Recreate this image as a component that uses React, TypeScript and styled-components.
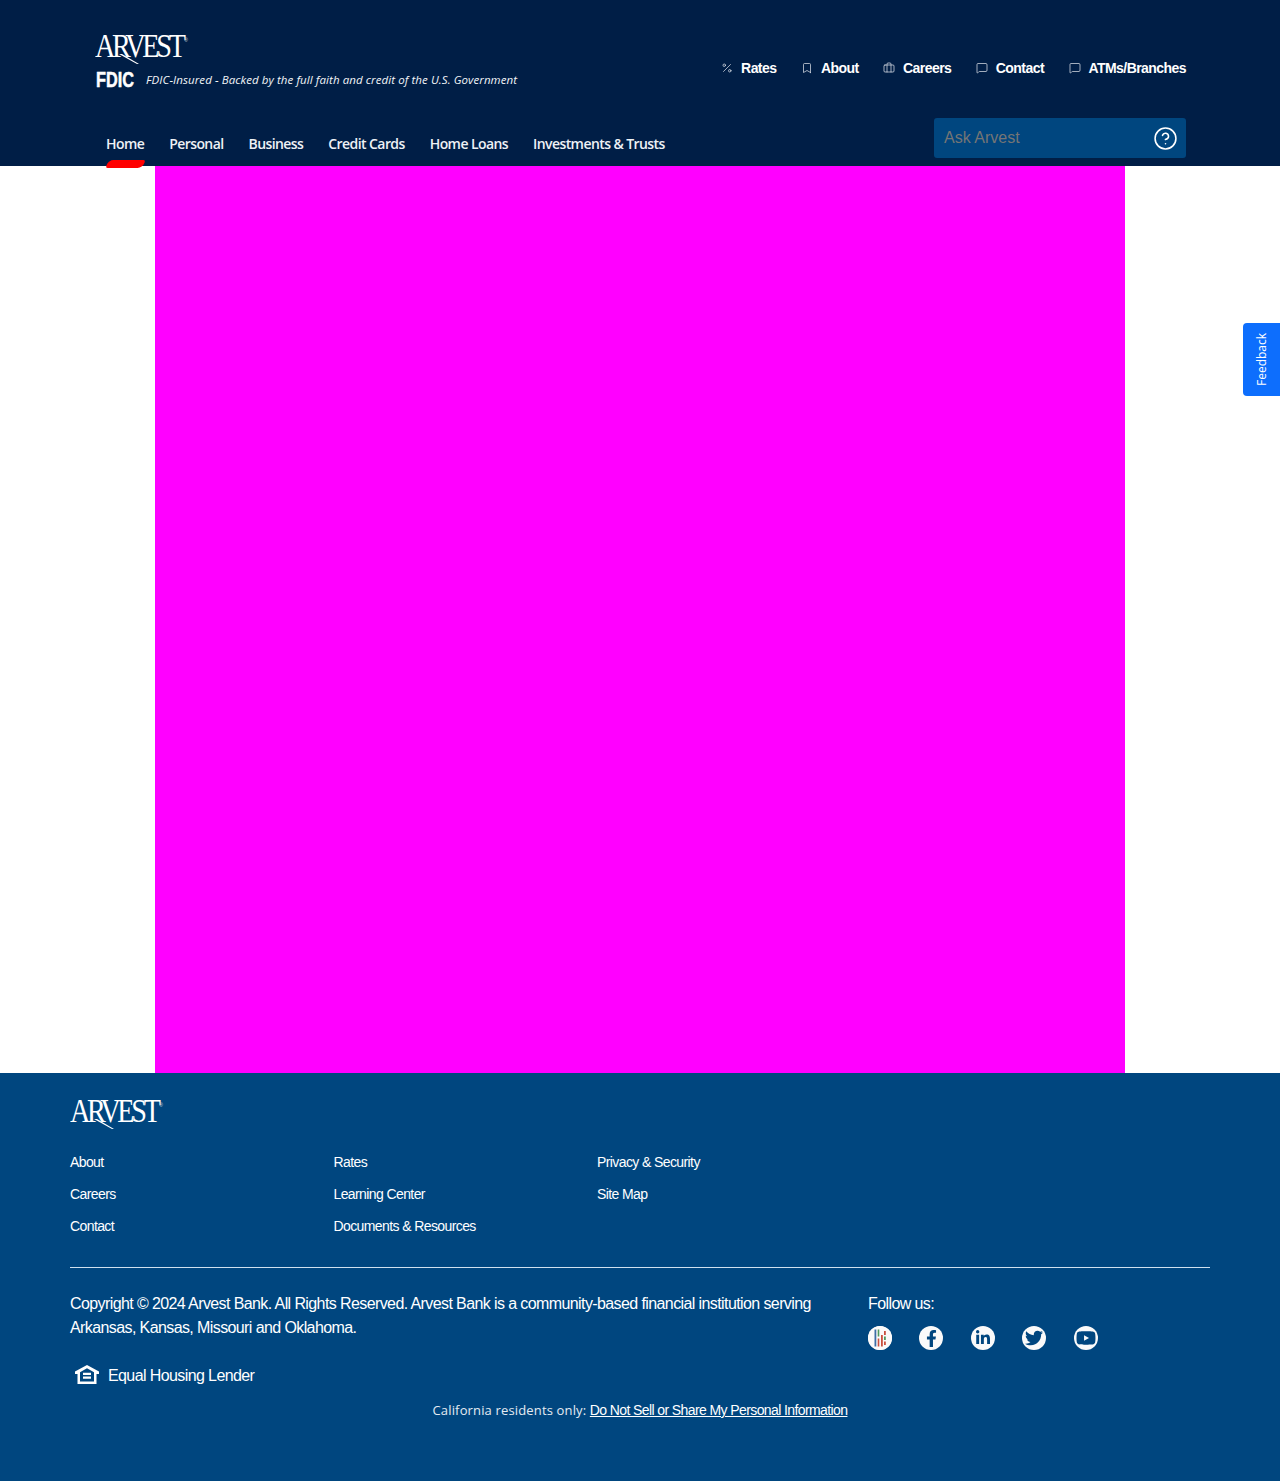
import React from 'react';
import styled, { createGlobalStyle } from 'styled-components';
import { Bookmark, Briefcase, CircleHelp, MessageSquare, Percent } from 'lucide-react';
import { FaFacebookF, FaLinkedinIn, FaTwitter, FaYoutube } from 'react-icons/fa';

const GlobalStyle = createGlobalStyle`
  html, body {
    margin: 0;
    padding: 0;
    background: #fff;
    font-family: "Liberation Sans", Arial, sans-serif;
  }
  * {
    box-sizing: border-box;
  }
`;

const topLinks = [
  { label: 'Rates', Icon: Percent },
  { label: 'About', Icon: Bookmark },
  { label: 'Careers', Icon: Briefcase },
  { label: 'Contact', Icon: MessageSquare },
  { label: 'ATMs/Branches', Icon: MessageSquare },
];

const navLinks = ['Home', 'Personal', 'Business', 'Credit Cards', 'Home Loans', 'Investments & Trusts'];

const footerColumns = [
  ['About', 'Careers', 'Contact'],
  ['Rates', 'Learning Center', 'Documents & Resources'],
  ['Privacy & Security', 'Site Map'],
];

const Logo: React.FC = () => (
  <LogoWrap>
    <LogoText>ARVEST</LogoText>
    <LogoMark>®</LogoMark>
    <LogoLeg viewBox="0 0 20 10" aria-hidden="true">
      <path d="M0 0 L18 10 L20 10 L3 0 Z" fill="#fff" />
    </LogoLeg>
  </LogoWrap>
);

const HousingIcon: React.FC = () => (
  <HousingSvg viewBox="0 0 24 19" aria-hidden="true">
    <path
      fillRule="evenodd"
      fill="#fff"
      d="M12 0 L24 6.5 V9 H21.5 V19 H2.5 V9 H0 V6.5 Z M12 3.3 L5 7.2 V16.6 H19 V7.2 Z M8 7.8 H16 V10 H8 Z M8 11.6 H16 V13.8 H8 Z"
    />
  </HousingSvg>
);

const BarsIcon: React.FC = () => (
  <svg width="24" height="24" viewBox="0 0 24 24" aria-hidden="true">
    <circle cx="12" cy="12" r="12" fill="#fafafa" />
    <rect x="6.5" y="3.5" width="1.8" height="17" fill="#3d6ea5" />
    <rect x="9.7" y="3.5" width="1.6" height="7" fill="#4f9a5e" />
    <rect x="9.7" y="12.5" width="1.6" height="8" fill="#c9503f" />
    <rect x="13" y="9" width="1.8" height="11.5" fill="#c9503f" />
    <rect x="16" y="5" width="1.8" height="4" fill="#c9503f" />
    <rect x="16" y="10.5" width="1.8" height="3.5" fill="#4f9a5e" />
    <rect x="16" y="15.5" width="1.8" height="3.5" fill="#c9503f" />
  </svg>
);

const App: React.FC = () => (
  <>
    <GlobalStyle />
    <Header>
      <TopRow>
        <Brand>
          <Logo />
          <FdicRow>
            <FdicBox>
              <FdicMark>FDIC</FdicMark>
            </FdicBox>
            <FdicNote>FDIC-Insured - Backed by the full faith and credit of the U.S. Government</FdicNote>
          </FdicRow>
        </Brand>
        <TopNav>
          {topLinks.map(({ label, Icon }) => (
            <TopLink key={label} href="#">
              <Icon size={12} strokeWidth={1.5} color="#d8dde6" />
              {label}
            </TopLink>
          ))}
        </TopNav>
      </TopRow>
      <NavRow>
        <MainNav>
          {navLinks.map((label, i) => (
            <NavLink key={label} href="#" $active={i === 0}>
              {label}
            </NavLink>
          ))}
        </MainNav>
        <SearchBox>
          <SearchInput placeholder="Ask Arvest" />
          <CircleHelp size={25} strokeWidth={1.5} color="#fff" />
        </SearchBox>
      </NavRow>
    </Header>
    <Main>
      <Placeholder />
      <FeedbackTab>Feedback</FeedbackTab>
    </Main>
    <Footer>
      <FooterLogo>
        <Logo />
      </FooterLogo>
      <LinkGrid>
        {footerColumns.map((column) => (
          <LinkColumn key={column[0]}>
            {column.map((label) => (
              <FooterLink key={label} href="#">
                {label}
              </FooterLink>
            ))}
          </LinkColumn>
        ))}
      </LinkGrid>
      <Rule />
      <LegalRow>
        <LegalText>
          <Copyright>
            Copyright © 2024 Arvest Bank. All Rights Reserved. Arvest Bank is a community-based financial
            institution serving Arkansas, Kansas, Missouri and Oklahoma.
          </Copyright>
          <Housing>
            <HousingIcon />
            Equal Housing Lender
          </Housing>
        </LegalText>
        <Follow>
          <FollowTitle>Follow us:</FollowTitle>
          <SocialRow>
            <SocialLink href="#" aria-label="Blog">
              <BarsIcon />
            </SocialLink>
            <SocialLink href="#" aria-label="Facebook">
              <FaFacebookF size={17} />
            </SocialLink>
            <SocialLink href="#" aria-label="LinkedIn">
              <FaLinkedinIn size={16} />
            </SocialLink>
            <SocialLink href="#" aria-label="Twitter">
              <FaTwitter size={18} />
            </SocialLink>
            <SocialLink href="#" aria-label="YouTube">
              <FaYoutube size={20} />
            </SocialLink>
          </SocialRow>
        </Follow>
      </LegalRow>
      <California>
        California residents only: <CaliforniaLink href="#">Do Not Sell or Share My Personal Information</CaliforniaLink>
      </California>
    </Footer>
  </>
);

export default App;

const Header = styled.header`
  height: 166px;
  background: #001e46;
  padding: 32px 94px 0 95px;
  display: flex;
  flex-direction: column;
  position: relative;
`;

const TopRow = styled.div`
  display: flex;
  justify-content: space-between;
  align-items: flex-start;
  height: 86px;
`;

const Brand = styled.div`
  display: flex;
  flex-direction: column;
`;

const LogoWrap = styled.div`
  position: relative;
  width: 92px;
  height: 32px;
  color: #fff;
`;

const LogoText = styled.span`
  display: block;
  width: 108px;
  font-family: "Liberation Serif", "Times New Roman", serif;
  font-size: 34px;
  line-height: 28px;
  letter-spacing: -4px;
  transform: scaleX(0.83);
  transform-origin: left top;
  white-space: nowrap;
`;

const LogoMark = styled.span`
  position: absolute;
  top: 5px;
  right: -1px;
  font-size: 5px;
  line-height: 6px;
  color: #c8d0dc;
`;

const LogoLeg = styled.svg`
  position: absolute;
  left: 24px;
  top: 22px;
  width: 20px;
  height: 10px;
`;

const FdicRow = styled.div`
  display: flex;
  align-items: center;
  margin-top: 7px;
  padding-left: 1px;
`;

const FdicBox = styled.div`
  width: 38px;
  height: 18px;
`;

const FdicMark = styled.span`
  display: block;
  width: 51px;
  font-family: "Liberation Sans", Arial, sans-serif;
  font-weight: 700;
  font-size: 22px;
  line-height: 18px;
  -webkit-text-stroke: 0.5px #fff;
  color: #fff;
  transform: scaleX(0.74);
  transform-origin: left center;
`;

const FdicNote = styled.span`
  margin-left: 12px;
  font-family: "Open Sans", sans-serif;
  font-style: italic;
  font-size: 11.5px;
  line-height: 18px;
  letter-spacing: 0.08px;
  color: #f2f4f7;
  white-space: nowrap;
`;

const TopNav = styled.nav`
  display: flex;
  gap: 24.5px;
  margin-top: 28px;
`;

const TopLink = styled.a`
  display: flex;
  align-items: center;
  gap: 8px;
  font-size: 14px;
  line-height: 16px;
  font-weight: 700;
  letter-spacing: -0.56px;
  color: #fff;
  text-decoration: none;
`;

const NavRow = styled.div`
  display: flex;
  justify-content: space-between;
  align-items: flex-start;
`;

const MainNav = styled.nav`
  display: flex;
  gap: 25px;
  padding-left: 11px;
  margin-top: 17px;
`;

const NavLink = styled.a<{ $active?: boolean }>`
  position: relative;
  font-family: "Open Sans", sans-serif;
  font-size: 14px;
  line-height: 18px;
  font-weight: 600;
  letter-spacing: -0.58px;
  color: #eef1f5;
  text-decoration: none;
  white-space: nowrap;

  &::after {
    content: '';
    display: ${({ $active }) => ($active ? 'block' : 'none')};
    position: absolute;
    left: 1px;
    right: 0;
    top: 25px;
    height: 8px;
    background: #f00;
    border-radius: 5px 2px 5px 2px;
    transform: skewX(-20deg);
    z-index: 2;
  }
`;

const SearchBox = styled.div`
  width: 252px;
  height: 40px;
  background: #00467f;
  border-radius: 3px;
  display: flex;
  align-items: center;
  padding: 0 8px 0 10px;
`;

const SearchInput = styled.input`
  flex: 1;
  min-width: 0;
  padding: 0;
  border: none;
  outline: none;
  background: transparent;
  font-family: "Liberation Sans", Arial, sans-serif;
  font-size: 16px;
  color: #fff;

  &::placeholder {
    color: #757575;
    opacity: 1;
  }
`;

const Main = styled.main`
  position: relative;
  height: 907px;
  display: flex;
  justify-content: center;
`;

const Placeholder = styled.div`
  width: 970px;
  background: #f0f;
`;

const FeedbackTab = styled.button`
  position: absolute;
  right: 0;
  top: 157px;
  width: 37px;
  height: 73px;
  padding: 0;
  border: none;
  background: #0d6efd;
  color: #fff;
  font-family: "Open Sans", sans-serif;
  font-size: 12px;
  writing-mode: vertical-rl;
  transform: rotate(180deg);
  border-radius: 0 4px 4px 0;
`;

const Footer = styled.footer`
  height: 408px;
  background: #00467f;
  padding: 24px 70px 0;
  color: #fff;
  display: flex;
  flex-direction: column;
`;

const FooterLogo = styled.div`
  height: 32px;
`;

const LinkGrid = styled.div`
  display: grid;
  grid-template-columns: repeat(3, 263.5px);
  margin-top: 17px;
`;

const LinkColumn = styled.div`
  display: flex;
  flex-direction: column;
`;

const FooterLink = styled.a`
  height: 32px;
  font-size: 14px;
  line-height: 32px;
  letter-spacing: -0.6px;
  color: #fff;
  text-decoration: none;
`;

const Rule = styled.hr`
  width: 100%;
  height: 1px;
  margin: 25px 0 0;
  border: none;
  background: #cfe0ee;
`;

const LegalRow = styled.div`
  display: flex;
  margin-top: 24px;
`;

const LegalText = styled.div`
  width: 798px;
  display: flex;
  flex-direction: column;
`;

const Copyright = styled.p`
  width: 760px;
  margin: 0;
  font-size: 16px;
  line-height: 24px;
  letter-spacing: -0.6px;
`;

const Housing = styled.div`
  display: flex;
  align-items: center;
  gap: 9px;
  margin-top: 24px;
  padding-left: 5px;
  font-size: 16px;
  line-height: 24px;
  letter-spacing: -0.6px;
`;

const HousingSvg = styled.svg`
  width: 24px;
  height: 19px;
  margin-top: -4px;
`;

const Follow = styled.div`
  display: flex;
  flex-direction: column;
`;

const FollowTitle = styled.div`
  font-size: 16px;
  line-height: 24px;
  letter-spacing: -0.6px;
`;

const SocialRow = styled.div`
  display: flex;
  gap: 27.4px;
  margin-top: 10px;
`;

const SocialLink = styled.a`
  width: 24px;
  height: 24px;
  border-radius: 50%;
  background: #fafafa;
  color: #00467f;
  display: flex;
  align-items: center;
  justify-content: center;
`;

const California = styled.div`
  margin-top: 10px;
  text-align: center;
  font-family: "Open Sans", sans-serif;
  font-size: 13px;
  line-height: 24px;
  letter-spacing: 0.15px;
  color: #e4ebf2;
`;

const CaliforniaLink = styled.a`
  font-family: "Liberation Sans", Arial, sans-serif;
  font-size: 14px;
  letter-spacing: -0.6px;
  color: #fff;
  text-decoration: underline;
`;
